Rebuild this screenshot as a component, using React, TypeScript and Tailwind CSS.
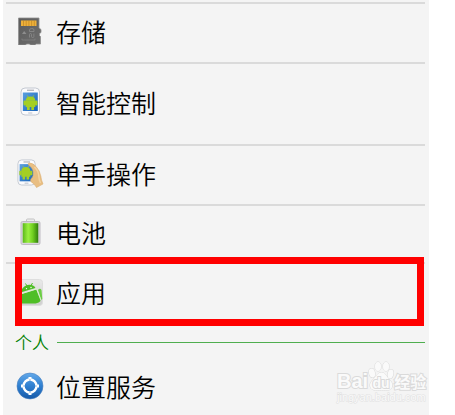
import React from 'react';

interface SettingRowProps {
  label: string;
  icon: React.ReactNode;
  className: string;
}

const SdCardIcon = () => (
  <svg viewBox="0 0 26 28" className="w-[26px] h-[28px]">
    <defs>
      <linearGradient id="sd" x1="0" y1="0" x2="1" y2="1">
        <stop offset="0" stopColor="#5c5c5c" />
        <stop offset="1" stopColor="#6e6e6e" />
      </linearGradient>
    </defs>
    <path d="M1.500 1h20.500v10l2 1.500v3l-1.500 1v2l1 1v7.500h-4.500l-1 1h-4.500l-1-1h-3l-1 1h-7z" fill="url(#sd)" stroke="#8f8f8f" strokeWidth=".8" />
    <path d="M4 3.500h15.500v5.500H4z" fill="#eeb03a" />
    <path d="M6.500 3.500v5.500M9.200 3.500v5.500M11.900 3.500v5.500M14.600 3.500v5.500M17.300 3.500v5.500" stroke="#b57d22" strokeWidth=".6" />
    <path d="M5 17l2.200-3 2.200 3z" fill="#8d8d8d" />
    <path d="M12.500 20.500v-3q0-1 1-1t1 1v2q0 1 1.200 1t1.200-1v-3M12.500 14.500h4.500v-1.500q0-1.500-2.200-1.500t-2.300 1.500z" fill="none" stroke="#8b8b8b" strokeWidth=".8" />
    <path d="M5 21.500v1.500h13v-1.500" fill="none" stroke="#858585" strokeWidth=".7" />
  </svg>
);

const Robot = () => (
  <g fill="#a4cf22">
    <path d="M5.700 13.800q0-4.300 4.800-4.300t4.800 4.300z" />
    <path d="M5.700 13.500h9.600V20H5.700zM7 19.500h2.700V23H7zM11.300 19.500H14V23h-2.700z" />
    <rect x="3.500" y="13.500" width="2.500" height="5" rx=".9" />
    <rect x="15" y="13.500" width="2.500" height="5" rx=".9" />
    <path d="M7.200 8.300l1 1.700M13.800 8.300l-1 1.700" stroke="#a4cf22" strokeWidth=".8" />
  </g>
);

const PhoneBody = () => (
  <>
    <defs>
      <linearGradient id="screen" x1="0" y1="0" x2="1" y2="1">
        <stop offset="0" stopColor="#5a9fe0" />
        <stop offset="1" stopColor="#1763b8" />
      </linearGradient>
    </defs>
    <rect x="1" y="1" width="18.500" height="27" rx="4" fill="#fbfbfd" stroke="#c3c8d1" />
    <path d="M7 3.200h7" stroke="#9a9fa8" strokeWidth="1" />
    <rect x="2.800" y="5.500" width="15" height="18.500" fill="url(#screen)" />
    <rect x="8" y="25.300" width="4.500" height="1.500" rx=".7" fill="#d0d3da" />
  </>
);

const PhoneIcon = () => (
  <svg viewBox="0 0 21 30" className="w-[21px] h-[30px]">
    <PhoneBody />
    <Robot />
  </svg>
);

const OneHandIcon = () => (
  <svg viewBox="0 0 28 30" className="w-[28px] h-[30px]">
    <g transform="translate(1 1) scale(.93)">
      <PhoneBody />
      <g transform="translate(-1 -1)">
        <Robot />
      </g>
    </g>
    <path d="M12.500 7q-1-2 1-2 3.500 0 6.500 3.500 4 4.500 4.800 9.500.3 4 2.200 8L20.500 29.500q-1-2.500-4-4.500-3-2-1.500-4 3-3 2.500-7-1-4.500-5-7z" fill="#e9be82" stroke="#dcae70" strokeWidth=".6" />
    <path d="M18.500 9q4 4 4.300 9t1.700 7" fill="none" stroke="#f3d3a2" strokeWidth="1.500" />
  </svg>
);

const BatteryIcon = () => (
  <svg viewBox="0 0 21 28" className="w-[21px] h-[28px]">
    <defs>
      <linearGradient id="cell">
        <stop offset="0" stopColor="#5cb81a" />
        <stop offset=".35" stopColor="#9bf040" />
        <stop offset=".65" stopColor="#6fce1f" />
        <stop offset="1" stopColor="#2f7d0b" />
      </linearGradient>
    </defs>
    <path d="M6.500 4V2q0-1 1-1h6q1 0 1 1v2" fill="#ededed" stroke="#c3c3c3" />
    <rect x="1" y="3.500" width="19" height="23" rx="1.500" fill="#d9d5dc" stroke="#c0bcc3" />
    <rect x="2.700" y="5.200" width="15.600" height="19.600" fill="url(#cell)" />
  </svg>
);

const AppsIcon = () => (
  <svg viewBox="0 0 27 27" className="w-[27px] h-[27px]">
    <defs>
      <linearGradient id="tile" x1="0" y1="0" x2="0" y2="1">
        <stop offset="0" stopColor="#e9e9e9" />
        <stop offset="1" stopColor="#cfcfcf" />
      </linearGradient>
    </defs>
    <rect x=".5" y=".5" width="25" height="26" rx="3" fill="url(#tile)" stroke="#dedede" />
    <path d="M3.500 13.500q1.500-6 7-7.500 5.500-1 8 3z" fill="#4fbe26" />
    <path d="M8.500 4.500l1.500 2.500M15.500 4l-1.500 2.500" stroke="#4fbe26" strokeWidth="1" />
    <path d="M1 16.200l18.500-5.700 4 10q.5 2-1.800 3l-3 1H1z" fill="#4fbe26" />
    <path d="M21 11q2-2.500 3.500 0l.8 9-1 1z" fill="#6cce44" />
    <path d="M1 15.600l18.500-5.800 4.300 11.200" fill="none" stroke="#dff3d3" strokeWidth=".9" />
    <circle cx="9.500" cy="9.600" r=".7" fill="#fff" />
    <circle cx="14" cy="8.500" r=".7" fill="#fff" />
  </svg>
);

const LocationIcon = () => (
  <svg viewBox="0 0 28 28" className="w-[28px] h-[28px]">
    <defs>
      <linearGradient id="disc" x1="0" y1="0" x2="0" y2="1">
        <stop offset="0" stopColor="#63a9ea" />
        <stop offset=".5" stopColor="#2f7fd0" />
        <stop offset="1" stopColor="#1559a8" />
      </linearGradient>
    </defs>
    <circle cx="14" cy="14" r="13" fill="url(#disc)" stroke="#4a80bd" strokeWidth=".6" />
    <circle cx="14" cy="14" r="6.500" fill="none" stroke="#fff" strokeWidth="2.400" />
    <path d="M14 5v3M14 20v3M5 14h3M20 14h3" stroke="#fff" strokeWidth="3" />
    <path d="M14 7.500v1M14 19.500v1M7.500 14h1M19.500 14h1" stroke="#3f86cf" strokeWidth="1.200" />
  </svg>
);

const SettingRow: React.FC<SettingRowProps> = ({ label, icon, className }) => (
  <button type="button" className={`flex w-full items-center gap-[2px] pb-1 text-left ${className}`}>
    <span className="flex w-12 shrink-0 justify-center">{icon}</span>
    <span className="text-[25px] leading-9 font-[350]">{label}</span>
  </button>
);

const Watermark = () => (
  <div className="absolute right-1 bottom-3 w-[88px] text-[#fafafa] [-webkit-text-stroke:2px_#dadada] [paint-order:stroke_fill]">
    <div className="flex h-[30px] items-end font-bold">
      <span className="font-['Liberation_Sans'] text-xl leading-5">Bai</span>
      <span className="relative h-[30px] w-[26px] shrink-0">
        <svg viewBox="0 0 26 30" className="w-[26px] h-[30px]" fill="#fafafa" stroke="#dadada" strokeWidth="1">
          <ellipse cx="4" cy="12" rx="3" ry="4.500" transform="rotate(-12 4 12)" />
          <ellipse cx="10" cy="5.500" rx="3" ry="4.500" />
          <ellipse cx="18" cy="5.500" rx="3" ry="4.500" />
          <ellipse cx="22.500" cy="13" rx="2.800" ry="4.500" transform="rotate(12 22.500 13)" />
          <path d="M13.500 11.500c3.500 0 4.500 3.500 7 6 3 3 4.500 5.500 3.500 8.500-1.200 3.500-4.500 3.500-10.500 3.300-6 .2-10 .2-11.200-3.300-1-3 .7-5.500 3.700-8.500 2.500-2.500 4-6 7.500-6z" />
        </svg>
        <span className="absolute inset-x-0 bottom-0 text-center font-['Liberation_Sans'] text-sm leading-4">du</span>
      </span>
      <span className="text-base leading-5 whitespace-nowrap">经验</span>
    </div>
    <div className="font-['Liberation_Sans'] text-[11px] leading-3 font-normal whitespace-nowrap [-webkit-text-stroke:1px_#e0e0e0]">jingyan.baidu.com</div>
  </div>
);

const App: React.FC = () => (
  <div className="min-h-screen bg-white font-['Noto_Sans_CJK_SC',sans-serif] text-black">
    <main className="relative mr-[26px] ml-[3px] min-h-screen bg-[#f4f4f4] pt-[2px] pr-1 pl-[3px]">
      <SettingRow label="存储" icon={<SdCardIcon />} className="h-[60px] border-t-2 border-[#dadada]" />
      <SettingRow label="智能控制" icon={<PhoneIcon />} className="h-[82px] border-t-2 border-[#dadada]" />
      <SettingRow label="单手操作" icon={<OneHandIcon />} className="h-[60px] border-t-2 border-[#dadada]" />
      <SettingRow label="电池" icon={<BatteryIcon />} className="h-[58px] border-t-2 border-[#dadada]" />
      <div className="relative">
        <SettingRow label="应用" icon={<AppsIcon />} className="h-[62px] border-t-2 border-[#dadada]" />
        <div className="pointer-events-none absolute -top-[5px] -bottom-[2px] left-[9px] right-px border-[7px] border-[#ff0000]" />
      </div>
      <div className="flex h-9 items-center gap-2 pl-[9px]">
        <h2 className="text-[17px] leading-6 font-[350] text-[#008000]">个人</h2>
        <div className="h-px flex-1 bg-[#4fae4f]" />
      </div>
      <SettingRow label="位置服务" icon={<LocationIcon />} className="h-[55px]" />
      <Watermark />
    </main>
  </div>
);

export default App;
